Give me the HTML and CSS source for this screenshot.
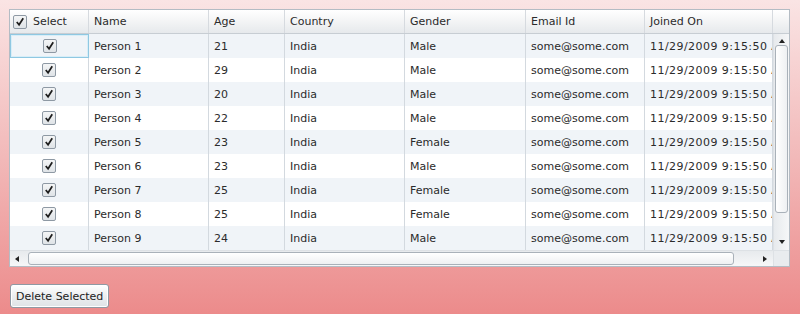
FILE: index.html
```html
<!DOCTYPE html>
<html lang="en">

<head>
    <meta charset="UTF-8">
    <title>People Grid</title>
    <link rel="stylesheet" href="styles.css">
</head>

<body>
    <div class="grid">
        <div class="head">
            <div class="cell c-select"><span class="check"><svg viewBox="0 0 13 13"><path d="M3 6.5 L5.5 9.5 L10 2.5" /></svg></span>Select</div>
            <div class="cell c-name">Name</div>
            <div class="cell c-age">Age</div>
            <div class="cell c-country">Country</div>
            <div class="cell c-gender">Gender</div>
            <div class="cell c-email">Email Id</div>
            <div class="cell c-joined">Joined On</div>
            <div class="cell filler"></div>
        </div>

        <div class="body">
            <div class="rows">
                <div class="row alt">
                    <div class="cell c-select current"><span class="check"><svg viewBox="0 0 13 13"><path d="M3 6.5 L5.5 9.5 L10 2.5" /></svg></span></div>
                    <div class="cell c-name">Person 1</div>
                    <div class="cell c-age">21</div>
                    <div class="cell c-country">India</div>
                    <div class="cell c-gender">Male</div>
                    <div class="cell c-email">some@some.com</div>
                    <div class="cell c-joined">11/29/2009 9:15:50 AM</div>
                </div>
                <div class="row">
                    <div class="cell c-select"><span class="check"><svg viewBox="0 0 13 13"><path d="M3 6.5 L5.5 9.5 L10 2.5" /></svg></span></div>
                    <div class="cell c-name">Person 2</div>
                    <div class="cell c-age">29</div>
                    <div class="cell c-country">India</div>
                    <div class="cell c-gender">Male</div>
                    <div class="cell c-email">some@some.com</div>
                    <div class="cell c-joined">11/29/2009 9:15:50 AM</div>
                </div>
                <div class="row alt">
                    <div class="cell c-select"><span class="check"><svg viewBox="0 0 13 13"><path d="M3 6.5 L5.5 9.5 L10 2.5" /></svg></span></div>
                    <div class="cell c-name">Person 3</div>
                    <div class="cell c-age">20</div>
                    <div class="cell c-country">India</div>
                    <div class="cell c-gender">Male</div>
                    <div class="cell c-email">some@some.com</div>
                    <div class="cell c-joined">11/29/2009 9:15:50 AM</div>
                </div>
                <div class="row">
                    <div class="cell c-select"><span class="check"><svg viewBox="0 0 13 13"><path d="M3 6.5 L5.5 9.5 L10 2.5" /></svg></span></div>
                    <div class="cell c-name">Person 4</div>
                    <div class="cell c-age">22</div>
                    <div class="cell c-country">India</div>
                    <div class="cell c-gender">Male</div>
                    <div class="cell c-email">some@some.com</div>
                    <div class="cell c-joined">11/29/2009 9:15:50 AM</div>
                </div>
                <div class="row alt">
                    <div class="cell c-select"><span class="check"><svg viewBox="0 0 13 13"><path d="M3 6.5 L5.5 9.5 L10 2.5" /></svg></span></div>
                    <div class="cell c-name">Person 5</div>
                    <div class="cell c-age">23</div>
                    <div class="cell c-country">India</div>
                    <div class="cell c-gender">Female</div>
                    <div class="cell c-email">some@some.com</div>
                    <div class="cell c-joined">11/29/2009 9:15:50 AM</div>
                </div>
                <div class="row">
                    <div class="cell c-select"><span class="check"><svg viewBox="0 0 13 13"><path d="M3 6.5 L5.5 9.5 L10 2.5" /></svg></span></div>
                    <div class="cell c-name">Person 6</div>
                    <div class="cell c-age">23</div>
                    <div class="cell c-country">India</div>
                    <div class="cell c-gender">Male</div>
                    <div class="cell c-email">some@some.com</div>
                    <div class="cell c-joined">11/29/2009 9:15:50 AM</div>
                </div>
                <div class="row alt">
                    <div class="cell c-select"><span class="check"><svg viewBox="0 0 13 13"><path d="M3 6.5 L5.5 9.5 L10 2.5" /></svg></span></div>
                    <div class="cell c-name">Person 7</div>
                    <div class="cell c-age">25</div>
                    <div class="cell c-country">India</div>
                    <div class="cell c-gender">Female</div>
                    <div class="cell c-email">some@some.com</div>
                    <div class="cell c-joined">11/29/2009 9:15:50 AM</div>
                </div>
                <div class="row">
                    <div class="cell c-select"><span class="check"><svg viewBox="0 0 13 13"><path d="M3 6.5 L5.5 9.5 L10 2.5" /></svg></span></div>
                    <div class="cell c-name">Person 8</div>
                    <div class="cell c-age">25</div>
                    <div class="cell c-country">India</div>
                    <div class="cell c-gender">Female</div>
                    <div class="cell c-email">some@some.com</div>
                    <div class="cell c-joined">11/29/2009 9:15:50 AM</div>
                </div>
                <div class="row alt">
                    <div class="cell c-select"><span class="check"><svg viewBox="0 0 13 13"><path d="M3 6.5 L5.5 9.5 L10 2.5" /></svg></span></div>
                    <div class="cell c-name">Person 9</div>
                    <div class="cell c-age">24</div>
                    <div class="cell c-country">India</div>
                    <div class="cell c-gender">Male</div>
                    <div class="cell c-email">some@some.com</div>
                    <div class="cell c-joined">11/29/2009 9:15:50 AM</div>
                </div>
            </div>

            <!-- vertical scrollbar -->
            <div class="vscroll">
                <span class="arrow up"></span>
                <span class="vthumb"></span>
                <span class="arrow down"></span>
            </div>
        </div>

        <div class="foot">
            <div class="hscroll">
                <span class="arrow left"></span>
                <span class="hthumb"></span>
                <span class="arrow right"></span>
            </div>
            <div class="corner"></div>
        </div>
    </div>

    <button class="btn">Delete Selected</button>
</body>

</html>
```

FILE: styles.css
```css
:root {
    --line: #d3d9df;
    --text: #2b2b2b;
    --alt-bg: #f0f4f8;
}

* {
    margin: 0;
    padding: 0;
    box-sizing: border-box;
}

html,
body {
    height: 100%;
}

body {
    font-family: "DejaVu Sans", Verdana, sans-serif;
    font-size: 11px;
    color: var(--text);
    padding: 9px;
    background: linear-gradient(#fae4e4, #f2b9b9 50%, #ec8b8b);
    overflow: hidden;
}

.grid {
    width: 781px;
    border: 1px solid #b4bcc4;
    background: #ffffff;
    display: flex;
    flex-direction: column;
}

.head,
.row {
    display: flex;
}

.head {
    height: 24px;
    background: linear-gradient(#ffffff, #f3f4f5 50%, #e6e9ec);
    border-bottom: 1px solid #c7cdd3;
}

.cell {
    flex: none;
    display: flex;
    align-items: center;
    padding-left: 5px;
    border-right: 1px solid var(--line);
    white-space: nowrap;
    overflow: hidden;
}

.head .cell {
    border-right-color: #d6dadf;
}

.c-select { width: 79px; }
.c-name { width: 120px; }
.c-age { width: 76px; }
.c-country { width: 120px; }
.c-gender { width: 121px; }
.c-email { width: 119px; }
.c-joined { width: 128px; }

.row .c-joined {
    letter-spacing: 0.45px;
}

.head .c-select {
    padding-left: 3px;
    gap: 6px;
}

.filler {
    width: 16px;
    border-right: none;
}

.body {
    display: flex;
    height: 216px;
}

.rows {
    width: 763px;
    overflow: hidden;
}

.row {
    height: 24px;
    background: #ffffff;
}

.row.alt {
    background: var(--alt-bg);
}

.row .c-select {
    justify-content: center;
    padding-left: 0;
}

.current {
    border: 1px solid #8fc8e2;
    box-shadow: inset 0 0 0 1px #d8eef8;
}

.check {
    width: 14px;
    height: 14px;
    border: 1px solid #8e99a4;
    border-radius: 2px;
    background: linear-gradient(#f4f5f6, #dfe3e7);
    display: inline-flex;
    align-items: center;
    justify-content: center;
}

.check svg {
    width: 12px;
    height: 12px;
    fill: none;
    stroke: #1e1e1e;
    stroke-width: 1.9;
}

/* scrollbars */
.vscroll {
    width: 16px;
    background: linear-gradient(90deg, #e7eaed, #f6f7f8);
    border-left: 1px solid #dde1e5;
    display: flex;
    flex-direction: column;
    align-items: center;
}

.vthumb {
    width: 13px;
    margin: 2px 0 0;
    height: 168px;
    border: 1px solid #a9b1b9;
    border-radius: 3px;
    background: linear-gradient(90deg, #ffffff, #eef0f2);
}

.arrow {
    width: 0;
    height: 0;
    border: 3px solid transparent;
    flex: none;
}

.arrow.up {
    border-bottom: 4px solid #222;
    border-top: none;
    margin-top: 5px;
}

.arrow.down {
    border-top: 4px solid #222;
    border-bottom: none;
    margin-top: auto;
    margin-bottom: 6px;
}

.foot {
    display: flex;
    height: 16px;
    border-top: 1px solid #dde1e5;
}

.hscroll {
    width: 763px;
    display: flex;
    align-items: center;
    background: linear-gradient(#e7eaed, #f6f7f8);
}

.arrow.left {
    border-right: 4px solid #222;
    border-left: none;
    margin-left: 5px;
}

.arrow.right {
    border-left: 4px solid #222;
    border-right: none;
    margin-left: auto;
    margin-right: 6px;
}

.hthumb {
    width: 706px;
    height: 13px;
    margin-left: 9px;
    border: 1px solid #a9b1b9;
    border-radius: 3px;
    background: linear-gradient(#ffffff, #eef0f2);
}

.corner {
    flex: 1;
    background: #e9ecef;
    border-left: 1px solid #dde1e5;
}

.btn {
    display: block;
    margin: 17px 0 0 1px;
    height: 24px;
    padding: 0 5px;
    font-family: "DejaVu Sans", Verdana, sans-serif;
    font-size: 11px;
    color: #222;
    border: 1px solid #8f99a3;
    border-radius: 3px;
    background: linear-gradient(#ffffff, #eceef0 50%, #dfe3e6);
    box-shadow: inset 0 0 0 1px #ffffff;
}
```
